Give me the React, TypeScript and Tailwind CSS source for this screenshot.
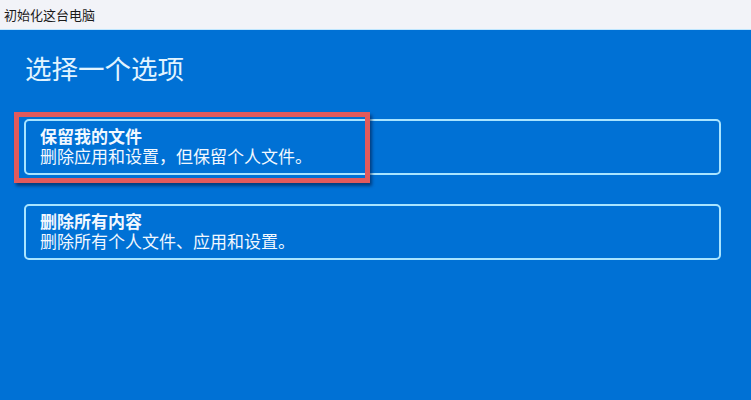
import React from 'react';

const options = [
    { title: '保留我的文件', desc: '删除应用和设置，但保留个人文件。' },
    { title: '删除所有内容', desc: '删除所有个人文件、应用和设置。' },
];

const App = () => {
    return (
        <div
            className="w-[751px] h-[400px] flex flex-col overflow-hidden bg-[#0071d5]"
            style={{ fontFamily: '"Noto Sans CJK SC", "Microsoft YaHei", "Noto Sans", sans-serif' }}
        >
            <div className="h-[30px] shrink-0 bg-[#f2f3f8] border-b border-[#bfe6ff] flex items-center pl-[4px] text-[13px] text-[#1a1a1a]">
                初始化这台电脑
            </div>
            <div className="flex-1 flex flex-col px-[24px]">
                <h1 className="mt-[22px] text-[26.5px] leading-[32px] text-[#e2f4ff] pl-[1px]">选择一个选项</h1>
                <ul className="mt-[35px] flex flex-col gap-[29px] w-[697px]">
                    {options.map((opt, i) => (
                        <li key={opt.title} className="relative">
                            <div className="h-[56px] rounded-[5px] border-2 border-[#a8e4ff] pl-[14px] pt-[4px] text-[17px] leading-[22px] text-[#f2f8ff]">
                                <p className="font-bold">{opt.title}</p>
                                <p className="-mt-[2px]">{opt.desc}</p>
                            </div>
                            {i === 0 && (
                                <div className="absolute left-[-10px] top-[-7px] w-[356px] h-[71px] border-[5px] border-[#e25a5c] shadow-[2px_3px_3px_rgba(0,20,60,0.55)] pointer-events-none" />
                            )}
                        </li>
                    ))}
                </ul>
            </div>
        </div>
    );
};

export default App;
